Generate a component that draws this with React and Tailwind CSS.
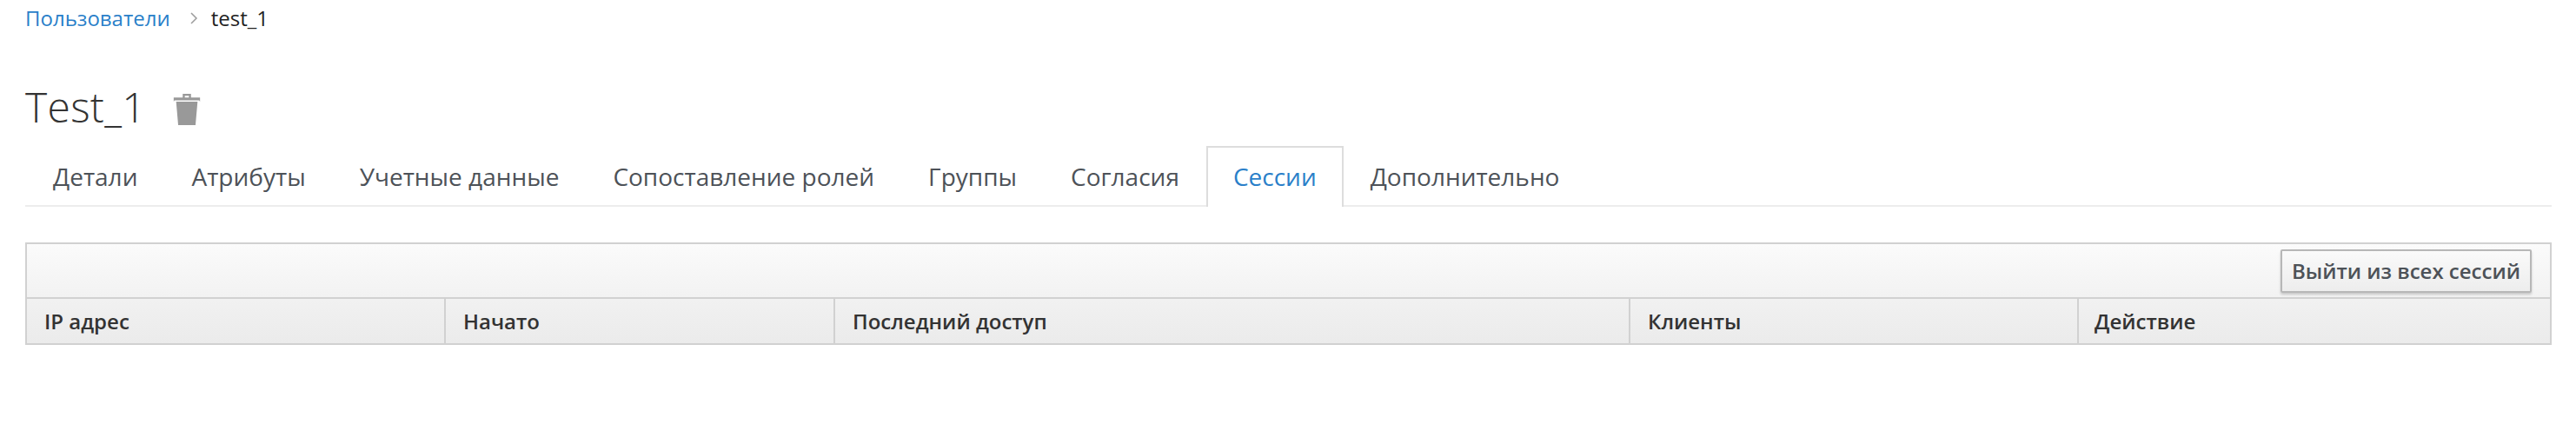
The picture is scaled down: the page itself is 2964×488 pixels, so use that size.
const tabs = ["Детали", "Атрибуты", "Учетные данные", "Сопоставление ролей", "Группы", "Согласия", "Сессии", "Дополнительно"]

function TrashIcon() {
  return (
    <svg width="32" height="36" viewBox="0 0 32 38" className="ml-[31px] mt-[6px]">
      <path fill="#999999" d="M11 0h10v4.500h-2.500V2.500h-5V4.500H11zM0 4.500h32V9.500l-1-1.500H1l-1 1.500zM3 9.500h26l-2.500 28.500h-21z" />
    </svg>
  )
}

export default function App() {
  return (
    <div className="w-[2964px] h-[488px] bg-white overflow-hidden pl-[29px] pr-[28px] font-['Open_Sans','Noto_Sans',sans-serif]">

      {/* BREADCRUMB */}
      <div className="flex items-center h-[42px] text-[24px] leading-[42px]">
        <span className="text-[#2a7fc9]">Пользователи</span>
        <svg width="12" height="16" viewBox="0 0 12 16" className="ml-[21px] mr-[14px]">
          <path d="M3 2l6 6-6 6" fill="none" stroke="#9c9c9c" strokeWidth="1.500" />
        </svg>
        <span className="text-[#222222]">test_1</span>
      </div>

      {/* TITLE */}
      <div className="flex items-center mt-[54px] h-[54px]">
        <h1 className="text-[48px] font-light tracking-[0.3px] leading-[54px] text-[#333333]">Test_1</h1>
        <TrashIcon />
      </div>

      {/* TABS */}
      <div className="flex mt-[18px] h-[70px] pl-[1px] border-b-2 border-[#ededed]">
        {tabs.map(tab => (
          <div
            key={tab}
            className={
              tab === "Сессии"
                ? "h-[70px] px-[29px] border-2 border-b-0 border-[#dddddd] bg-white text-[#2a7fc9] text-[28px] leading-[66px]"
                : "h-[68px] px-[31px] text-[#4d5258] text-[28px] leading-[70px]"
            }
          >
            {tab}
          </div>
        ))}
      </div>

      {/* TABLE */}
      <div className="mt-[41px] border-2 border-[#d1d1d1]">
        <div className="flex justify-end items-center h-[63px] pr-[21px] border-b-2 border-[#d1d1d1] bg-gradient-to-b from-[#fbfbfb] to-[#f2f2f2]">
          <button className="h-[50px] px-[11px] border-2 border-[#b7b7b7] rounded-[2px] bg-gradient-to-b from-[#fafafa] to-[#ededed] text-[#4d5258] text-[24px] font-semibold shadow-[0_2px_3px_rgba(3,3,3,0.18)]">
            Выйти из всех сессий
          </button>
        </div>
        <div className="flex h-[51px] bg-gradient-to-b from-[#f1f1f1] to-[#ebebeb] text-[24px] font-semibold leading-[51px] text-[#333333]">
          <div className="w-[482px] pl-[20px] border-r-2 border-[#d1d1d1]">IP адрес</div>
          <div className="w-[448px] pl-[20px] border-r-2 border-[#d1d1d1]">Начато</div>
          <div className="w-[915px] pl-[20px] border-r-2 border-[#d1d1d1]">Последний доступ</div>
          <div className="w-[516px] pl-[20px] border-r-2 border-[#d1d1d1]">Клиенты</div>
          <div className="flex-1 pl-[18px]">Действие</div>
        </div>
      </div>

    </div>
  )
}
